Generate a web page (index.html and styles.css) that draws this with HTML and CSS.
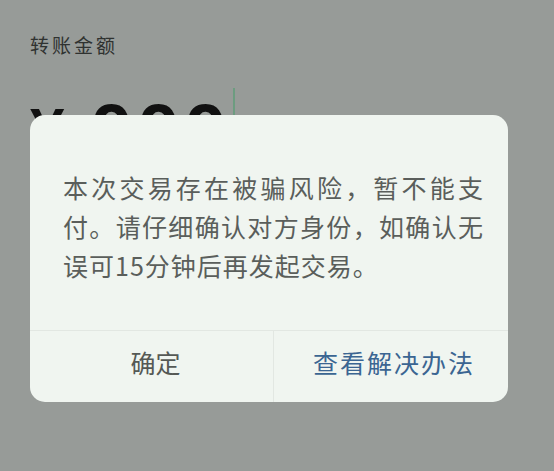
FILE: index.html
```html
<!DOCTYPE html>
<html lang="zh-CN">
<head>
<meta charset="utf-8">
<link rel="stylesheet" href="styles.css">
</head>
<body>
<div class="page">
  <div class="label">转账金额</div>
  <div class="amount"><span class="yen">¥</span><span class="digits">999</span><span class="cursor"></span></div>
  <div class="dialog">
    <div class="msg">本次交易存在被骗风险，暂不能支付。请仔细确认对方身份，如确认无误可15分钟后再发起交易。</div>
    <div class="actions">
      <div class="btn ok">确定</div>
      <div class="btn link">查看解决办法</div>
    </div>
  </div>
</div>
</body>
</html>
```
FILE: styles.css
```css
html, body {
  margin: 0;
  padding: 0;
  background: #979b98;
  font-family: "Noto Sans CJK SC", "Liberation Sans", sans-serif;
}
.page {
  position: relative;
  width: 554px;
  height: 471px;
  overflow: hidden;
}
.label {
  position: absolute;
  left: 30px;
  top: 31px;
  font-size: 19px;
  line-height: 28px;
  color: #2f3230;
  letter-spacing: 3px;
}
.amount {
  position: absolute;
  left: 30px;
  top: 90px;
  display: flex;
  align-items: flex-start;
  font-family: "Liberation Sans", sans-serif;
  font-weight: bold;
  color: #111;
  font-size: 72px;
  line-height: 80px;
}
.yen {
  width: 62px;
  font-size: 62px;
}
.digits {
  letter-spacing: 7px;
}
.cursor {
  width: 2px;
  height: 40px;
  margin-top: -2px;
  background: #6d9c80;
}
.dialog {
  position: absolute;
  left: 30px;
  top: 115px;
  width: 478px;
  height: 287px;
  background: #f0f5f0;
  border-radius: 15px;
  display: flex;
  flex-direction: column;
  overflow: hidden;
}
.msg {
  padding: 53px 24px 0 33px;
  height: 215px;
  box-sizing: border-box;
  font-size: 25px;
  line-height: 39px;
  letter-spacing: 1px;
  text-align: justify;
  color: #5a5e5b;
}
.actions {
  flex: 1;
  display: flex;
  border-top: 1px solid #e2e7e2;
}
.btn {
  flex: 1;
  display: flex;
  align-items: center;
  justify-content: center;
  font-size: 25px;
  padding-bottom: 10px;
}
.ok {
  color: #555955;
  flex: 0 0 244px;
  padding-left: 8px;
  box-sizing: border-box;
  border-right: 1px solid #e2e7e2;
}
.link {
  color: #3b6592;
  letter-spacing: 2px;
  padding-left: 6px;
}
```
